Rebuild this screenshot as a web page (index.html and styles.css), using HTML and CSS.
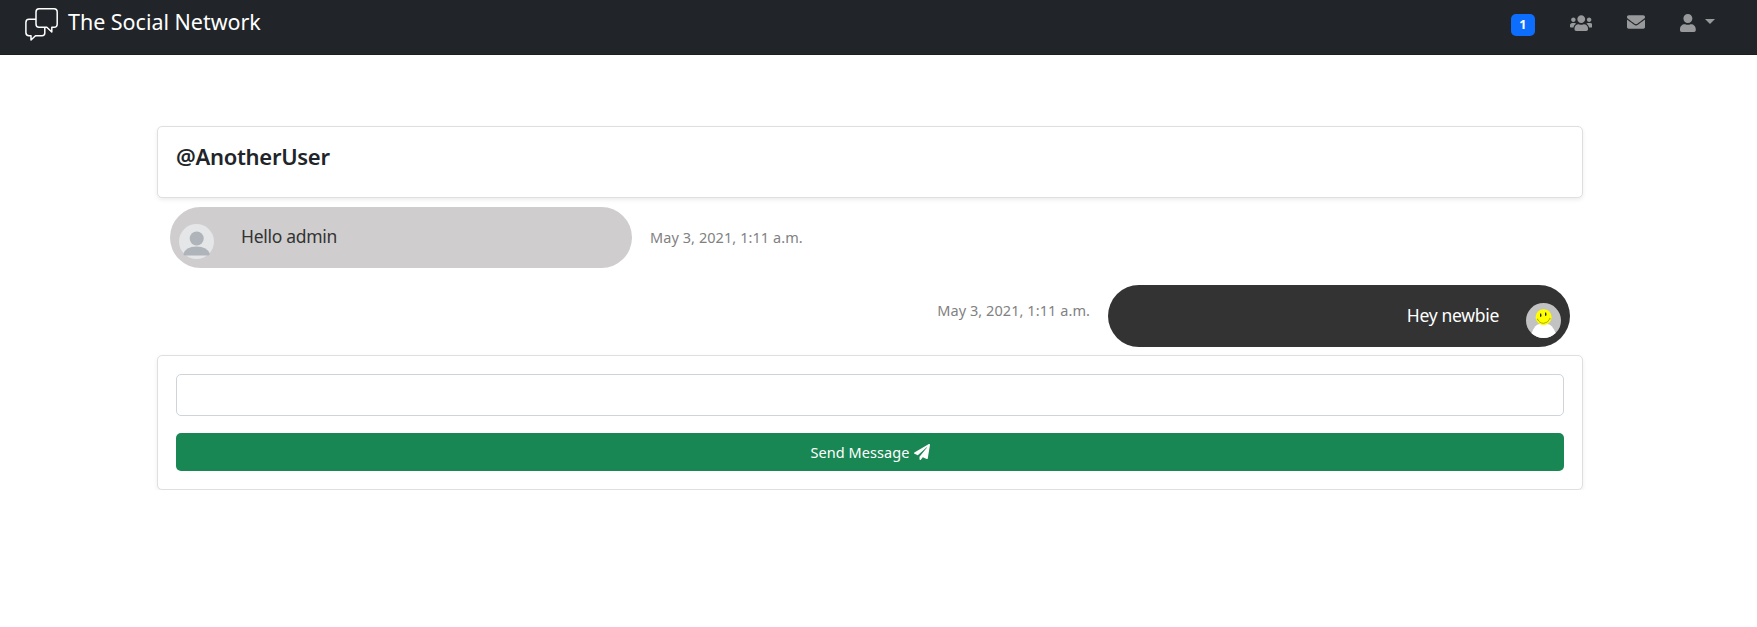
FILE: index.html
```html
<!DOCTYPE html>
<html lang="en">
<head>
<meta charset="utf-8">
<title>The Social Network</title>
<link rel="stylesheet" href="styles.css">
</head>
<body>
<nav class="navbar">
  <a class="brand">
    <svg class="brand-logo" viewBox="0 0 34 34" width="34" height="34">
      <path d="M12 12.300H5Q1.900 12.300 1.900 15.500V25.500Q1.900 28.700 5 28.700H7V33L11.500 28.700H18Q20.800 28.700 20.800 26V20.500"/>
      <path d="M15 1.700H30Q33.200 1.700 33.200 5V17Q33.200 20.300 30 20.300H27.800V25L22.800 20.300H15Q12 20.300 12 17V5Q12 1.700 15 1.700Z"/>
    </svg>
    <span class="brand-name">The Social Network</span>
  </a>
  <div class="nav-items">
    <span class="badge">1</span>
    <svg class="icon-users" viewBox="0 0 640 512" width="22.500" height="18"><path d="M96 224c35.300 0 64-28.700 64-64s-28.700-64-64-64-64 28.700-64 64 28.700 64 64 64zm448 0c35.300 0 64-28.700 64-64s-28.700-64-64-64-64 28.700-64 64 28.700 64 64 64zm32 32h-64c-17.600 0-33.500 7.100-45.100 18.600 40.300 22.100 68.900 62 75.100 109.400h66c17.700 0 32-14.300 32-32v-32c0-35.300-28.700-64-64-64zm-256 0c61.900 0 112-50.100 112-112S381.900 32 320 32 208 82.100 208 144s50.100 112 112 112zm76.800 32h-8.300c-20.800 10-43.900 16-68.500 16s-47.600-6-68.500-16h-8.300C179.600 288 128 339.600 128 403.200V432c0 26.500 21.500 48 48 48h288c26.500 0 48-21.500 48-48v-28.800c0-63.600-51.600-115.200-115.200-115.200zm-223.700-13.400C161.500 263.100 145.600 256 128 256H64c-35.300 0-64 28.700-64 64v32c0 17.700 14.300 32 32 32h65.900c6.300-47.400 34.900-87.300 75.200-109.400z"/></svg>
    <svg class="icon-mail" viewBox="0 0 512 512" width="18" height="18"><path d="M502.300 190.800c3.900-3.100 9.700-.2 9.700 4.700V400c0 26.500-21.500 48-48 48H48c-26.500 0-48-21.500-48-48V195.600c0-5 5.700-7.800 9.700-4.700 22.400 17.400 52.100 39.500 154.100 113.600 21.100 15.400 56.700 47.800 92.200 47.600 35.700.3 72-32.800 92.300-47.600 102-74.100 131.600-96.300 154-113.700zM256 320c23.200.4 56.600-29.200 73.400-41.400 132.700-96.300 142.800-104.700 173.400-128.700 5.800-4.500 9.200-11.500 9.200-18.900v-19c0-26.500-21.500-48-48-48H48c-26.500 0-48 21.500-48 48v19c0 7.400 3.400 14.300 9.200 18.900 30.600 23.900 40.700 32.400 173.400 128.700 16.800 12.200 50.200 41.800 73.400 41.400z"/></svg>
    <svg class="icon-user" viewBox="0 0 448 512" width="15.750" height="18"><path d="M224 256c70.700 0 128-57.300 128-128S294.700 0 224 0 96 57.300 96 128s57.300 128 128 128zm89.600 32h-16.700c-22.200 10.200-46.900 16-72.900 16s-50.600-5.800-72.900-16h-16.700C60.200 288 0 348.200 0 422.400V464c0 26.500 21.500 48 48 48h352c26.500 0 48-21.500 48-48v-41.600c0-74.200-60.200-134.400-134.400-134.400z"/></svg>
    <span class="caret"></span>
  </div>
</nav>
<main class="container">
  <section class="card thread-head"><h5 class="thread-title">@AnotherUser</h5></section>
  <div class="row received">
    <div class="bubble bubble-in">
      <svg class="avatar" viewBox="0 0 35 35" width="35" height="35">
        <circle cx="17.500" cy="17.500" r="17.500" fill="#e4e6e8"/>
        <circle cx="17.700" cy="14.500" r="7" fill="#aeb4b9"/>
        <path d="M4.500 30Q6.500 22.500 17.500 22.500T30.800 30Q30.500 31.500 28.500 31.500H6.500Q4.500 31.500 4.500 30Z" fill="#aeb4b9"/>
      </svg>
      <span class="text">Hello admin</span>
    </div>
    <time class="date">May 3, 2021, 1:11 a.m.</time>
  </div>
  <div class="row sent">
    <time class="date">May 3, 2021, 1:11 a.m.</time>
    <div class="bubble bubble-out">
      <span class="text">Hey newbie</span>
      <svg class="avatar" viewBox="0 0 35 35" width="35" height="35">
        <circle cx="17.500" cy="17.500" r="17.500" fill="#c3c2c2"/>
        <path d="M5.500 30.200Q9 21 14 21H21Q26 21 29.700 30A17.500 17.500 0 0 1 5.500 30.200Z" fill="#fff"/>
        <circle cx="17.600" cy="14.200" r="8" fill="#ff0"/>
        <ellipse cx="14.700" cy="12.200" rx=".7" ry="1.900" fill="#222"/>
        <ellipse cx="19.700" cy="11.200" rx=".7" ry="1.900" fill="#222"/>
        <path d="M11.500 16.200Q13.500 20.300 17.600 20.300T24 15.500M10.900 16.600L12 15.900M23.400 15.300L24.500 15.900" fill="none" stroke="#777700" stroke-width=".6"/>
      </svg>
    </div>
  </div>
  <form class="card composer">
    <input class="field" type="text" aria-label="Message">
    <button class="send" type="button"><span class="send-label">Send Message</span><svg viewBox="0 0 512 512" width="16" height="16"><path d="M476 3.200L12.500 270.600c-18.100 10.400-15.800 35.600 2.200 43.200L121 358.400l287.300-253.200c5.500-4.900 13.300 2.600 8.600 8.300L176 407v80.500c0 23.600 28.500 32.900 42.500 15.800L282 426l124.600 52.200c14.200 6 30.400-2.900 33-18.200l72-432C515 7.800 493.300-6.800 476 3.200z"/></svg></button>
  </form>
</main>
</body>
</html>
```
FILE: styles.css
```css
* { box-sizing: border-box; }
body { margin: 0; background: #fff; color: #212529; font-family: "Noto Sans", "Open Sans", sans-serif; }
.navbar { height: 55px; background: #212529; display: flex; justify-content: space-between; align-items: flex-start; padding: 0 42px 0 24px; border-bottom: 1px solid #1b1e21; }
.brand { display: flex; color: #fff; padding-top: 7px; gap: 10px; }
.brand-logo { fill: none; stroke: #fff; stroke-width: 1.5; stroke-linejoin: round; }
.brand-name { font-size: 21.5px; line-height: 30px; letter-spacing: -.03px; white-space: nowrap; }
.nav-items { display: flex; align-items: flex-start; fill: #97999b; }
.badge { width: 24px; height: 22px; margin: 14px 35px 0 0; border-radius: 5px; background: #0d6efd; color: #fff; font-size: 12.5px; font-weight: 700; line-height: 21px; text-align: center; }
.icon-users { margin: 13.500px 35px 0 0; }
.icon-mail { margin: 13px 35px 0 0; }
.icon-user { margin: 13.500px 9px 0 0; }
.caret { margin-top: 19px; border: 5.500px solid transparent; border-top-color: #97999b; border-bottom: 0; }
.container { width: 1426px; margin: 71px 0 0 157px; }
.card { border: 1px solid #dfdfdf; border-radius: 5px; background: #fff; box-shadow: 0 2px 4px rgba(0, 0, 0, .075); }
.thread-head { height: 72px; padding: 15px 18px; }
.thread-title { margin: 0; font-size: 22px; line-height: 28px; font-weight: 600; letter-spacing: -.3px; }
.row { display: flex; padding: 0 13px; gap: 18px; }
.received { margin-top: 9px; height: 61px; }
.sent { margin-top: 17px; height: 62px; justify-content: flex-end; }
.bubble { width: 462px; border-radius: 31px; display: flex; }
.bubble-in { background: #cfcdce; color: #333; padding: 17px 9px 0; gap: 27px; }
.bubble-out { background: #333; color: #fff; padding: 18px 9px 0; gap: 27px; justify-content: flex-end; }
.text { font-size: 17.500px; line-height: 26px; letter-spacing: -.3px; white-space: nowrap; }
.date { font-size: 14.500px; line-height: 20px; letter-spacing: .07px; color: #818181; white-space: nowrap; }
.received .text { margin-top: -1px; }
.received .date { margin-top: 20px; }
.sent .text { margin-top: -1px; }
.sent .date { margin-top: 15px; }
.composer { margin-top: 8px; height: 135px; padding: 18px; }
.field { display: block; width: 100%; height: 42px; border: 1px solid #ced4da; border-radius: 5px; background: #fff; margin-bottom: 17px; }
.send { display: flex; width: 100%; height: 38px; align-items: center; justify-content: center; gap: 4px; border: 0; border-radius: 5px; background: #198754; color: #fff; font: 14.500px/20px "Noto Sans", "Open Sans", sans-serif; letter-spacing: .07px; fill: #fff; }
```
